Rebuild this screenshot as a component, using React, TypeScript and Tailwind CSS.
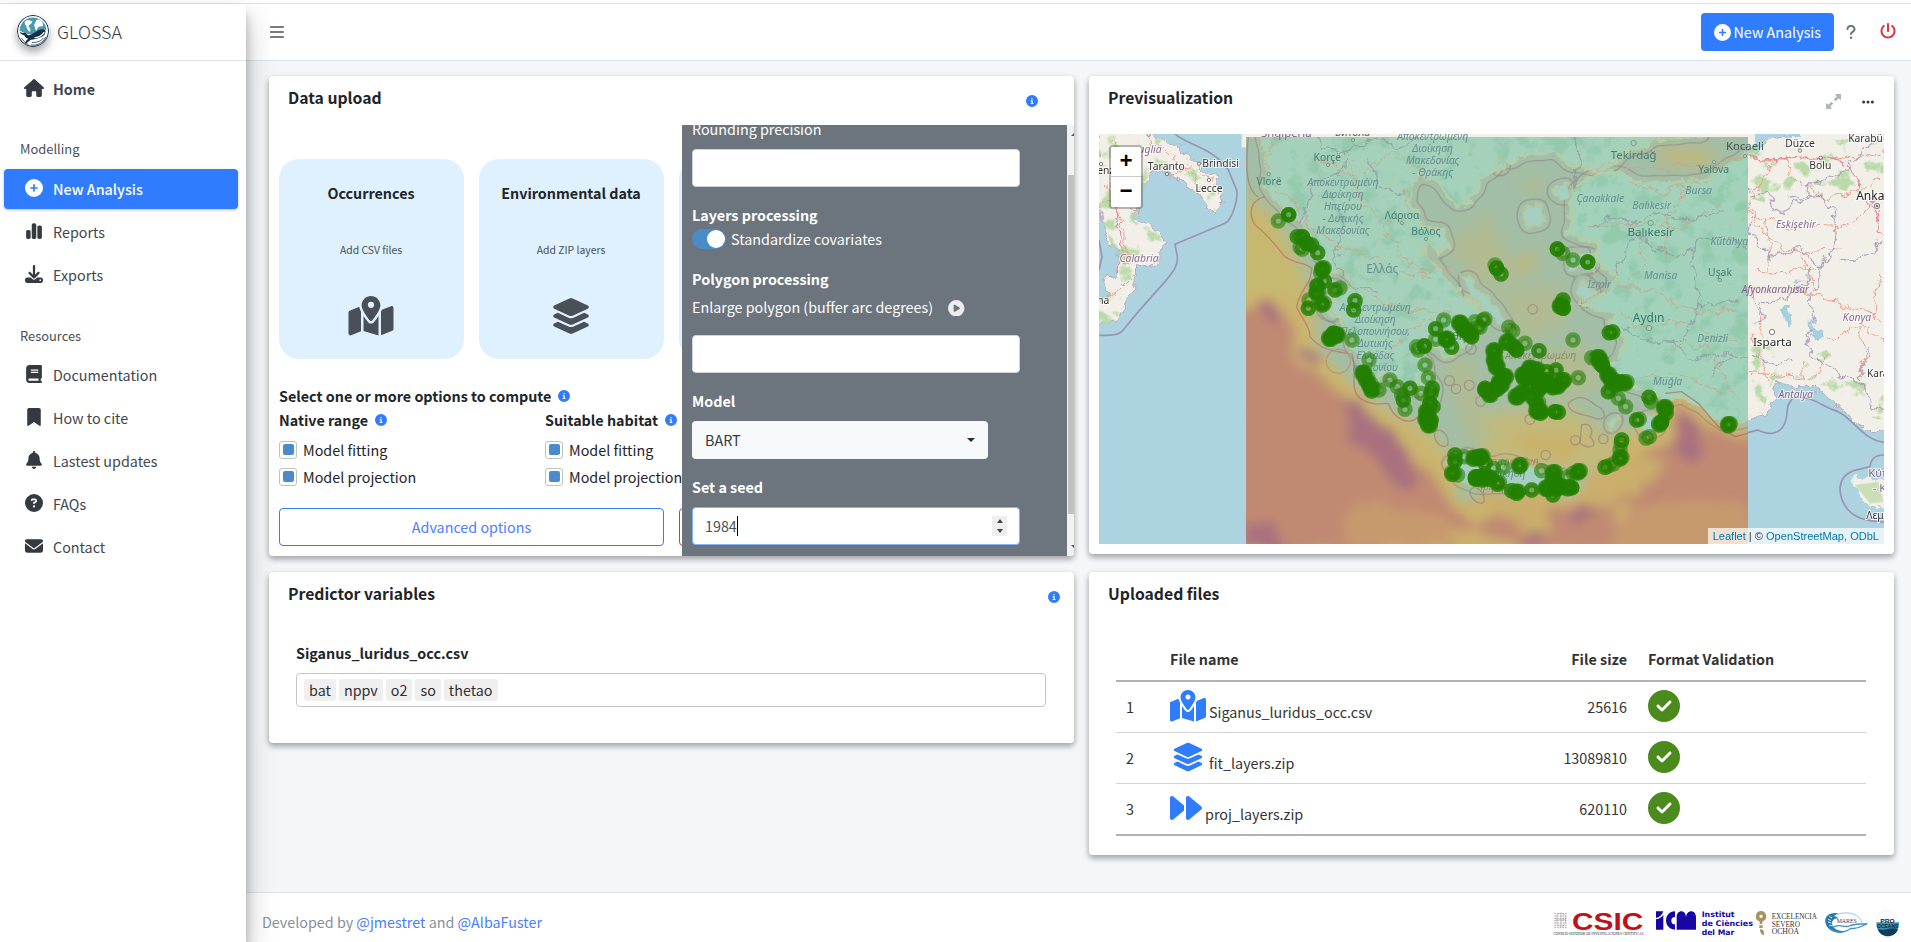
import React from "react";
import {
  FaBars, FaBell, FaBook, FaBookmark, FaChartSimple, FaCircleCheck, FaCircleInfo, FaCirclePlay,
  FaCirclePlus, FaCircleQuestion, FaDownload, FaEllipsis, FaEnvelope, FaForward, FaHouse,
  FaLayerGroup, FaMapLocationDot, FaPowerOff, FaQuestion, FaUpRightAndDownLeftFromCenter,
} from "react-icons/fa6";

type IconType = React.ComponentType<{ className?: string }>;

function WhaleLogo() {
  return (
    <svg viewBox="0 0 62 62" className="h-[32px] w-[32px] shrink-0 rounded-full shadow-[0_5px_8px_rgba(0,0,0,0.35)]">
      <circle cx="31" cy="31" r="30" fill="#fff" stroke="#12304a" strokeWidth="2" />
      <path d="M5 30C6 14 18 5 31 5s26 11 26 24c-6-3-14 1-20 5-8 5-20 4-32-4Z" fill="#4d9aab" />
      <path d="M15 13c5-5 9-2 15-1-1 5-6 6-8 10 4 4 5 6 3 11-4-3-7-7-7-12-3-2-3-5-3-8ZM37 10c6-3 9 0 12 4 3 6 1 9-3 8-5 1-7 3-8 9-4-3-3-8-5-12 2-3 3-5 4-9Z" fill="#fff" />
      <path d="M5 32c4 4 9 3 12 3 2 4 6 5 10 3 7-3 12-9 19-10 4-1 8 0 9 2 1 6-3 11-9 13-7 3-14 4-19 5-4 2-6 6-12 8 1-4 3-8 7-10-4-1-6-3-8-7-4 0-8-3-9-7Z" fill="#12304a" />
      <path d="M34 44c8 0 14-4 19-11" stroke="#fff" strokeWidth="2.5" fill="none" />
      <path d="M9 45c4 7 9 10 13 12m5 1c12 2 24-4 29-16m-27 11c10 1 18-3 23-9" stroke="#12304a" strokeWidth="1.5" fill="none" />
    </svg>
  );
}

function NavItem({ icon: Icon, label, active, bold }: { icon: IconType; label: string; active?: boolean; bold?: boolean }) {
  return (
    <div className={`mb-[3px] ml-1 mr-2 flex h-10 items-center rounded pl-[18px] text-[14.33px] ${active ? "bg-[#2f7cff] text-white shadow-[0_1px_3px_rgba(0,0,0,0.25)] font-medium" : "text-[#3f464d]"} ${bold ? "font-bold" : ""}`}>
      <span className={`mr-[7px] flex w-[24px] justify-center pb-[3px] text-[18px] ${active ? "" : "text-[#343a40]"}`}>
        <Icon className={bold ? "h-[18px] w-[20px]" : ""} />
      </span>
      <span>{label}</span>
    </div>
  );
}

function Sidebar() {
  return (
    <aside className="relative z-20 w-[246px] shrink-0 bg-white shadow-[0_14px_28px_rgba(0,0,0,0.25),0_10px_10px_rgba(0,0,0,0.22)]">
      <div className="flex h-[57px] items-center gap-[8px] border-b border-[#dee2e6] pl-[17px] pb-[3px] text-[17.9px] font-light text-[#343a40]">
        <WhaleLogo />
        <span className="pt-px">GLOSSA</span>
      </div>
      <div className="pt-[8px]"><NavItem icon={FaHouse} label="Home" bold /></div>
      <div className="mt-[24px] mb-[5px] pl-5 text-[12.9px] leading-[31px] text-[#495057]">Modelling</div>
      <NavItem icon={FaCirclePlus} label="New Analysis" active />
      <NavItem icon={FaChartSimple} label="Reports" />
      <NavItem icon={FaDownload} label="Exports" />
      <div className="mt-[24px] mb-[2px] pl-5 text-[12.9px] leading-[34px] text-[#495057]">Resources</div>
      <NavItem icon={FaBook} label="Documentation" />
      <NavItem icon={FaBookmark} label="How to cite" />
      <NavItem icon={FaBell} label="Lastest updates" />
      <NavItem icon={FaCircleQuestion} label="FAQs" />
      <NavItem icon={FaEnvelope} label="Contact" />
    </aside>
  );
}

function Card({ title, className, tools, children }: { title: string; className: string; tools?: React.ReactNode; children: React.ReactNode }) {
  return (
    <section className={`flex flex-col overflow-hidden rounded bg-white shadow-[0_3px_6px_rgba(0,0,0,0.16),0_3px_6px_rgba(0,0,0,0.23)] ${className}`}>
      <header className="flex h-[49px] shrink-0 items-start justify-between pl-[19px]">
        <h3 className="pt-[8px] text-[15.75px] font-bold leading-[28px] text-[#1f2428]">{title}</h3>
        {tools}
      </header>
      {children}
    </section>
  );
}

const Info = () => <FaCircleInfo className="inline-block h-3 w-3 shrink-0 text-[#2f7cff]" />;

function DropBox({ title, hint, icon }: { title: string; hint: string; icon?: React.ReactNode }) {
  return (
    <div className="flex h-[200px] w-[185px] shrink-0 flex-col items-center rounded-[20px] bg-[#dff1fe]">
      <div className="mt-[21px] h-[26px] pr-px text-[14.33px] font-bold leading-[26px] text-[#212529]">{title}</div>
      <div className="mt-[34px] h-[20px] pr-px text-[10.4px] leading-[20px] text-[#495057]">{hint}</div>
      <div className="mt-[36px] pr-px text-[40px] text-[#495057]">{icon}</div>
    </div>
  );
}

function Check({ label }: { label: string }) {
  return (
    <div className="flex h-[27px] items-center gap-[6px]">
      <span className="flex h-[18px] w-[18px] items-center justify-center rounded-[3px] border border-[#bdc3c7] bg-white">
        <span className="h-[11px] w-[11px] rounded-[2px] bg-[#4c8bca]" />
      </span>
      <span>{label}</span>
    </div>
  );
}

function OptionGroup({ title }: { title: string }) {
  return (
    <div className="w-[266px] shrink-0">
      <div className="mb-[4px] flex h-[24px] items-center gap-[7px] font-bold">{title} <Info /></div>
      <Check label="Model fitting" />
      <Check label="Model projection" />
    </div>
  );
}

function AdvancedPanel() {
  return (
    <div className="absolute right-0 top-0 flex h-[431px] w-[392px] overflow-hidden">
      <div className="w-[385px] shrink-0 overflow-hidden bg-[#6c757d] pl-[10px] text-[14.33px] leading-6 text-white">
        <div className="-mt-[8px]">Rounding precision</div>
        <div className="mt-[8px] h-[38px] w-[328px] rounded border border-[#ced4da] bg-white" />
        <div className="mt-[16px] font-bold">Layers processing</div>
        <div className="mt-[2px] flex items-center gap-[5px] leading-[20px]">
          <span className="flex h-5 w-[34px] items-center justify-end rounded-full bg-[#4c8bca] pr-px">
            <span className="h-[18px] w-[18px] rounded-full bg-white" />
          </span>
          Standardize covariates
        </div>
        <div className="mt-[18px] font-bold">Polygon processing</div>
        <div className="mt-[4px] flex items-center">Enlarge polygon (buffer arc degrees) <FaCirclePlay className="ml-[15px] mt-[2px] text-[16.5px] text-[#ececec]" /></div>
        <div className="mt-[16px] h-[38px] w-[328px] rounded border border-[#ced4da] bg-white" />
        <div className="mt-[16px] font-bold">Model</div>
        <div className="mt-[8px] flex h-[38px] w-[296px] items-center justify-between rounded bg-[#f8f9fa] pl-[13px] pr-[13px] text-[#343a40]">
          BART
          <span className="h-0 w-0 border-x-4 border-t-4 border-x-transparent border-t-[#1f2d3d]" />
        </div>
        <div className="mt-[16px] font-bold">Set a seed</div>
        <div className="mt-[8px] flex h-[38px] w-[328px] items-center rounded border border-[#80b4ff] bg-white pl-[12px] pr-3 text-[#495057]">
          <span>1984</span>
          <span className="h-5 w-px bg-black" />
          <span className="ml-auto flex h-5 w-[15px] flex-col items-center justify-center gap-[6px] bg-[#efefef]">
            <span className="h-0 w-0 border-x-[3.5px] border-b-[4px] border-x-transparent border-b-[#444]" />
            <span className="h-0 w-0 border-x-[3.5px] border-t-[4px] border-x-transparent border-t-[#444]" />
          </span>
        </div>
      </div>
      <div className="flex w-[7px] flex-col items-end justify-between bg-[#f1f1f1]">
        <span className="mt-[8px] h-0 w-0 border-l-[3px] border-b-[3px] border-l-transparent border-b-[#555]" />
        <span className="mt-[39px] w-[6px] flex-1 bg-[#c1c1c1]" />
        <span className="mb-[8px] mt-[31px] h-0 w-0 border-l-[3px] border-t-[3px] border-l-transparent border-t-[#555]" />
      </div>
    </div>
  );
}

function DataUpload() {
  return (
    <Card title="Data upload" className="h-[480px]" tools={<span className="mr-[36px] mt-[19px] flex items-center"><Info /></span>}>
      <div className="relative flex-1 overflow-hidden pl-[10px] text-[14.33px] leading-6 text-[#212529]">
        <div className="mt-[34px] flex gap-[15px]">
          <DropBox title="Occurrences" hint="Add CSV files" icon={<FaMapLocationDot className="h-[40px] w-[46px]" />} />
          <DropBox title="Environmental data" hint="Add ZIP layers" icon={<FaLayerGroup />} />
          <DropBox title="" hint="" />
        </div>
        <div className="mt-[24px] flex h-[25px] items-center gap-[7px] font-bold">Select one or more options to compute <Info /></div>
        <div className="flex">
          <OptionGroup title="Native range" />
          <OptionGroup title="Suitable habitat" />
        </div>
        <div className="mt-[18px] flex gap-[15px]">
          <div className="flex h-[38px] w-[385px] shrink-0 items-center justify-center rounded border border-[#2f7cff] text-[#4d7dff]">Advanced options</div>
          <div className="h-[38px] w-[385px] shrink-0 rounded border border-[#dc3545]" />
        </div>
        <AdvancedPanel />
      </div>
    </Card>
  );
}

/* Sampling locations: x, y and number of stacked records. */
const west: number[][] = [
  [580,483,1],[611,464,3],[637,530,2],[652,530,3],[665,550,3],[680,555,2],[652,568,1],[645,562,1],[698,578,2],[714,627,5],[707,638,1],[718,663,2],[697,677,3],[697,697,4],[750,690,2],[765,684,1],[672,720,1],[670,745,2],[714,732,4],[810,722,2],[806,750,2],[735,835,6],[755,825,6],[745,820,3],[801,840,1],[852,900,1],[835,940,6],[845,958,4],[855,975,4],[862,990,4],[882,990,1],[915,960,1],[937,980,1],[950,1005,1],[955,1020,2],[960,1048,1],[975,985,2],[1008,1000,1],[1020,915,1],[1030,953,1],[1042,985,2],[1038,1000,2],[1044,1040,2],[1026,1055,5],[1024,1078,6],[1032,1094,6],[1038,1080,3],[1035,1030,3],
  [1076,780,1],[1052,806,2],[1052,838,1],[995,860,1],[1000,870,1],[1018,858,3],[1085,838,6],[1100,862,2],[1125,790,6],[1138,808,6],[1155,822,4],[1160,830,2],[1170,785,1],[1178,800,1],[1195,780,1],[1110,1185,2],[1110,1203,3],[1104,1240,4],[1118,1245,1],[1138,1190,1],[1168,1195,5],[1185,1193,5],[1175,1253,5],[1195,1257,5],[1200,990,3],
];
const east: number[][] = [
  [232,567,3],[248,580,1],[279,600,1],[323,606,3],[45,615,1],[50,625,3],[63,642,2],[249,720,2],[242,738,5],[250,745,3],[15,777,1],[0,802,1],[86,802,1],[98,812,1],[82,847,5],[110,870,3],[100,858,3],[135,850,1],[177,872,2],[43,873,6],[50,920,6],[44,900,5],[75,950,6],[60,965,5],[50,985,6],[30,1003,6],[65,975,5],[15,985,2],
  [130,945,6],[150,925,6],[170,930,5],[180,965,6],[150,980,6],[175,990,5],[110,1010,6],[125,1000,5],[135,955,5],[160,1010,4],[172,1030,4],[172,1052,6],[183,1057,5],[225,1055,3],[235,1057,2],[228,930,2],[200,935,2],[200,960,3],[220,980,5],[235,978,5],[250,962,5],[190,975,5],[295,953,1],[279,840,1],[388,818,2],[398,816,2],[335,893,1],[355,893,6],[362,907,5],[368,918,3],[385,945,5],[395,960,5],[405,970,5],[420,968,5],[437,968,4],[385,995,2],[395,985,1],[415,1015,1],[437,1040,1],
  [507,1012,2],[513,1025,1],[555,1043,6],[558,1060,2],[545,1085,3],[540,1092,4],[470,1080,2],[478,1078,1],[498,1135,1],[508,1130,1],[747,1094,5],[425,1140,2],[423,1150,1],[420,1170,1],[422,1194,5],[375,1222,2],[385,1218,1],[400,1212,1],[297,1235,5],[280,1240,1],[262,1252,1],[222,1238,5],[220,1260,6],[240,1280,6],[265,1283,4],[275,1283,3],[200,1285,6],[225,1285,6],[219,1305,2],[155,1290,2],[112,1297,5],[95,1292,2],[120,1217,5],[70,1222,1],[40,1225,1],[185,1232,1],[5,1190,4],[15,1210,2],[10,1250,5],[30,1255,5],[55,1270,4],[-10,1255,4],
];

const greece = "M528 200L545 310 537 370 575 430 640 480 680 530 700 590 745 630 790 645 800 680 745 720 720 750 765 770 790 830 830 890 862 965 905 945 940 950 965 1000 990 990 1000 950 1030 1020 1060 1030 1030 930 985 870 1035 850 1080 890 1140 850 1120 790 1180 800 1205 770 1150 715 1085 660 1040 610 1010 570 1035 545 1060 580 1095 560 1075 510 1020 510 975 430 980 370 1010 340 1060 370 1120 440 1160 430 1190 350 1250 310 1400 270 1480 320 1570 330 1620 280 1700 240 1860 225 1860 200Z";
const anatolia = "M1440 530L1460 440 1465 390 1530 340 1600 345 1660 365 1750 370 1830 365 1900 335 1960 295 2010 270 2100 215 2420 200 2420 1108 2355 1112 2315 1090 2265 1045 2205 995 2145 975 2075 968 2065 1020 2045 1065 1989 1080 1932 1094 1890 1080 1850 1040 1785 1005 1740 1020 1700 1000 1640 975 1580 970 1560 920 1610 880 1625 840 1580 800 1575 760 1490 725 1560 700 1590 660 1530 590 1545 540Z";
const islands = "M1080 1205l60-20 90 25 90-5 70 30 80 15-20 25-120 5-130 5-90-20ZM1130 640l60 50 60 60 20 50-40-15-80-80ZM1320 440l60 0 0 40-50 20-20-30ZM1400 385l50-10 0 30-30 10ZM1480 670l50 10-10 40-50-10ZM1240 300l30-10 0 30-30 10ZM1450 570l70 10 10 50-70-10ZM1570 1090l30-20-10 50ZM1660 1080l70 -20-10 50-40 20ZM690 650l20 10 0 30-20-10ZM705 735l30 0 10 30-30-10Z";
const italy = "M42 200L190 222 262 250 290 272 345 312 372 345 405 372 417 400 400 460 370 440 350 412 345 388 310 370 262 355 245 335 215 338 195 352 170 395 160 435 142 460 150 485 190 500 215 510 232 540 230 590 205 615 155 625 152 690 120 725 95 790 30 790 30 740 70 705 55 660 90 650 105 610 75 545 50 480 30 430Z";

type LabelProps = { x: number; y: number; t: string; s?: number; c?: string; i?: boolean; halo?: boolean };
const Label = ({ x, y, t, s = 31, c = "#447f74", i, halo }: LabelProps) => (
  <text x={x} y={y} fontSize={s} fill={c} textAnchor="middle" fontStyle={i ? "italic" : "normal"} stroke={halo ? "#fff" : "none"} strokeOpacity={0.75} strokeWidth={halo ? 6 : 0} paintOrder="stroke">{t}</text>
);

const apokentro = (x: number, y: number, lines: string[]) => lines.map((t, k) => <Label key={`${x}-${k}`} x={x} y={y + k * 36} t={t} i c="#668f94" />);

function MapView() {
  return (
    <svg viewBox="42 222 2355 1230" className="block h-[410px] w-[785px]" fontFamily='"Noto Sans", sans-serif'>
      <defs>
        <clipPath id="raster"><rect x="483" y="231" width="1506" height="1221" /></clipPath>
        <filter id="soft" x="-20%" y="-20%" width="140%" height="140%"><feGaussianBlur stdDeviation="24" /></filter>
        <filter id="haze" x="-20%" y="-20%" width="140%" height="140%">
          <feTurbulence type="fractalNoise" baseFrequency="0.012" numOctaves="3" seed="8" result="n" />
          <feDisplacementMap in="SourceGraphic" in2="n" scale="70" xChannelSelector="R" yChannelSelector="G" result="d" />
          <feGaussianBlur in="d" stdDeviation="16" />
        </filter>
        <filter id="rough" x="-5%" y="-5%" width="110%" height="110%">
          <feTurbulence type="fractalNoise" baseFrequency="0.025" numOctaves="4" seed="3" result="n" />
          <feDisplacementMap in="SourceGraphic" in2="n" scale="48" xChannelSelector="R" yChannelSelector="G" />
        </filter>
        <filter id="forest" x="0" y="0" width="100%" height="100%" colorInterpolationFilters="sRGB">
          <feTurbulence type="fractalNoise" baseFrequency="0.02" numOctaves="5" seed="11" result="n" />
          <feColorMatrix in="n" values="0 0 0 0 0.70  0 0 0 0 0.84  0 0 0 0 0.62  7 0 0 0 -3.9" result="g" />
          <feComposite in="g" in2="SourceAlpha" operator="in" />
        </filter>
        <filter id="grove" x="0" y="0" width="100%" height="100%" colorInterpolationFilters="sRGB">
          <feTurbulence type="fractalNoise" baseFrequency="0.018" numOctaves="5" seed="4" result="n" />
          <feColorMatrix in="n" values="0 0 0 0 0.52  0 0 0 0 0.77  0 0 0 0 0.64  6 0 0 0 -3.2" result="g" />
          <feComposite in="g" in2="SourceAlpha" operator="in" />
        </filter>
        <filter id="contour" x="-10%" y="-10%" width="120%" height="120%" colorInterpolationFilters="sRGB">
          <feTurbulence type="fractalNoise" baseFrequency="0.025" numOctaves="3" seed="3" result="n" />
          <feDisplacementMap in="SourceAlpha" in2="n" scale="48" xChannelSelector="R" yChannelSelector="G" result="d" />
          <feGaussianBlur in="d" stdDeviation="15" />
          <feComponentTransfer result="b"><feFuncA type="table" tableValues="0 0 0.6 0 0 0 0 0 0 0 0 0 0 0 0 0 0 0 0 0 0 0 0 0 0 0" /></feComponentTransfer>
          <feFlood floodColor="#94807f" />
          <feComposite in2="b" operator="in" />
        </filter>
      </defs>

      <rect x="42" y="222" width="2355" height="1230" fill="#add2e0" />
      <rect x="470" y="222" width="1540" height="40" fill="#f2efe9" />
      <g filter="url(#rough)">
        <path d={italy} fill="#f2efe9" stroke="#b9a8bd" strokeWidth="3" />
        <path d={anatolia} fill="#f2efe9" stroke="#b9a8bd" strokeWidth="3" />
        <path d="M2298 1270l25-20 50 0 40 30 0 65-50-5-35-25Z" fill="#f2efe9" />
      </g>
      <g opacity="0.85">
        <path d={italy} fill="#000" filter="url(#forest)" />
        <path d="M1995 225h130l90 20 180-20v130l-100 40-100-20-130 60-70-20ZM1995 860l60-10 90 50 80-30 70 90 100 20v100l-60-10-110-90-100-30-60 10-30 90-40 20Z" filter="url(#forest)" />
        <path d="M2310 1275l70-10 15 60-40 5Z" fill="#c3dcae" />
      </g>
      <g fill="none" stroke="#9585a8" strokeWidth="5" strokeOpacity=".8">
        <path d="M270 222C305 255 385 262 430 330L455 390C460 420 440 480 420 490L270 553 277 590C280 620 260 640 240 665L160 755 110 815C95 830 60 826 42 826M42 540l9 50-9 40" />
        <path d="M1989 1118l30-8c40 20 75 10 85-35 5-30-2-35 20-62 55-10 90 30 135 42 45 20 75 85 138 92M2397 1185c-35 0-40 20-42 35l-50 12c-55 20-45 80-18 115 30 35 70 35 110 40" />
      </g>
      <g fill="none" stroke="#ee9d86" strokeWidth="3" filter="url(#rough)">
        <path d="M190 222l10 60M80 240l60 90-60 60 35 90 5 120 40 10M60 370l110 90M245 342l90 -30 70 90M160 632l-60 60-60 30M215 250l140 130" />
        <path d="M1989 290l90 10 130-10 110 10 77-20M2100 290l30 70 100 60 160-60M1989 455l120 50 180-10 70-60M2060 300l-70 130 60 110 100 40 120-10M2010 635h120l60-10M2040 470l20 170M2125 690l140 40 100 30 32 30M2150 580l30 110M2000 940l100 10 80 10 60-90M2150 900l10 60M2330 790l67 50M2330 800l-100 40M2330 800l10 90-20 60M2385 650l-20 130M1995 830l60 130M2005 680l30 150" />
      </g>
      <g fill="none" stroke="#e589a5" strokeWidth="4" filter="url(#rough)"><path d="M50 430l50 10 5 90-5 110M1989 285l110 15 150-10 70 60 5 60 40 30 30 80M2397 400l-50 40" /></g>
      <g fill="none" stroke="#9a89ad" strokeWidth="4" strokeOpacity=".75" filter="url(#rough)">
        <path d="M1989 405l60-10 20 60 100-40 10-40 130-60 30-50 50-20M2105 415l110-10 30 50 10 120-50 40-60-50-90 25-60-70 10-50M2210 600l-10 90-30 10 20 90-30 70 60 50 110 70 20 60 60 10M2010 790l40-60 100-40 25-80M2270 600l80-10 40-50M2000 890l60 20 70-20M2350 870l-30 90" />
      </g>
      <g fill="#a5cfe0" filter="url(#rough)"><path d="M2095 730l15 0 10 50-15 25-10-30ZM2170 785l15 0 30 50-20 10ZM2085 222h60v14l-50-4ZM2135 660l15 3-8 10Z" /></g>

      <g clipPath="url(#raster)">
        <rect x="483" y="231" width="1506" height="1221" fill="#a2bea6" />
        <g filter="url(#soft)">
          <path d="M483 400l80 60 70 120 50 130 20 170 90 120 250 120 100 120-50 80-400-180-250-430Z" fill="#c7b870" />
          <path d="M1140 520l70-50 30 50-90 50ZM1180 560l60-10-20 90ZM1290 630l40-60 30 20-40 60ZM1310 370l40-10 10 40Z" fill="#c9b46e" />
          <path d="M1700 270h190l-20 45-140-10Z" fill="#c9b46e" />
          <path d="M1180 1060l280-20 120 90 200-90 110 40-100 120-100 120-160-80-350-20Z" fill="#c3b97a" />
          <path d="M1250 690l170-20 30 120-150 60ZM1070 900l90 0 60 250-60 20ZM1350 880l140-30 70 130-130 40ZM1080 560l130-100 90 180-90 60Z" fill="#b1bb92" />
        </g>
        <g filter="url(#haze)">
          <path d="M420 730L560 720 635 750 650 880 750 960 830 1020 940 1110 1040 1210 1110 1310 1180 1380 1300 1340 1470 1320 1620 1180 1725 1130 1770 1030 1825 1030 1880 1100 2060 1130 2060 1500 420 1500Z" fill="#c08a72" stroke="#cbb36d" strokeWidth="40" />
          <path d="M1130 1320l170-20 150 10-60 50-140 30ZM1500 1250l130-60 100 10-60 90-170 80ZM1270 1400l90-40 40 30-70 50ZM900 1430l200-40 200 60-20 60H900ZM1580 1340l60-20-20 60-50 20Z" fill="#caae6c" />
          <path d="M760 1000l70 20 30 50 60 50 60 60 20 60-30 50-60-30-70-90-60-60ZM655 865l45 10 10 40-40 5ZM480 1370l80 30 60 80H470ZM500 750l40-30 50 50-40 20ZM1780 1070l35 0 50 90-50 60-50-40ZM1450 1380l50-40 50-20-30 50-50 30ZM1330 1420l50-10-10 30-50 20Z" fill="#a9717e" />
          <path d="M1600 1360l200-40 200 20v160h-420ZM800 1330l260 30 60 100H770Z" fill="#c79a6e" />
          <path d="M1250 1160l70-40 130 0 60 30-70 50-100-30Z" fill="#c9b26c" />
        </g>
        <g>
          <path d={greece} filter="url(#contour)" />
          <path d={anatolia} filter="url(#contour)" />
          <path d={islands} filter="url(#contour)" />
        </g>
        <g filter="url(#rough)">
          <path d={greece} fill="#a5d0ba" stroke="#b5cda6" strokeWidth="9" />
          <path d={anatolia} fill="#a2d2bb" stroke="#b5cda6" strokeWidth="9" />
          <path d={islands} fill="#a5cfc0" stroke="#b5c5a0" strokeWidth="6" />
        </g>
        <g opacity=".5">
          <path d={greece} filter="url(#grove)" />
          <path d={anatolia} filter="url(#grove)" />
        </g>
        <g fill="none" stroke="#9b7f7c" strokeOpacity=".65" strokeWidth="4">
          <path d="M540 410c-45 10-50 50-30 85 40 30 60 60 90 95 35 25 60 15 80 35 0 50-35 60-45 115 10 30 40 55 40 90 30 35 50 40 110 50M800 880c20 60-10 100 25 135 40 25 65 15 85 15 15 45 60 70 90 40 25-20 25-50 10-70M490 231c-10 100-5 160 30 180" stroke="#b96a60" />
          <circle cx="760" cy="904" r="36" stroke="#cb8655" /><circle cx="1093" cy="962" r="15" /><circle cx="1113" cy="987" r="14" /><circle cx="1153" cy="976" r="15" /><circle cx="1158" cy="867" r="16" /><circle cx="1187" cy="1024" r="15" /><circle cx="1343" cy="748" r="14" /><circle cx="1382" cy="1185" r="14" /><circle cx="1471" cy="1141" r="14" /><circle cx="1555" cy="1137" r="14" /><circle cx="1335" cy="1078" r="15" />
          <path d="M1050 1115c15-15 45 10 38 40-20 15-45-15-38-40ZM1155 1290c15-20 45 5 42 35-15 15-45-10-42-35ZM1490 1095c30-10 35 20 25 35 30 30-5 40-30 20ZM1450 1030c30-30 60-15 80 5 35 15 40 50 0 40-30-15-80-10-80-45Z" />
          <path d="M1740 1000l50-5 50 35 60 70 50 30 40-10" stroke="#a8656a" />
        </g>
        <g fill="none" stroke="#8d8299" strokeWidth="4" strokeOpacity=".55" filter="url(#rough)">
          <path d="M700 222l10 40 60 10 120-40 40 30 90-40M640 490l30-60 20-70 70-20 30-80M740 400l30 90-20 110 40 80 90 10M860 290l20 80 80 30M1460 222l30 80-20 90M1510 500l80-30 60 20 60-30 80 20 120-20M1590 650l40-120 60 10 80 60 80-70 130 20M1820 560l20 180 120-20M1610 800l90 50 90-10 60-110M1750 840l70 60 80-20 89 10M1870 950l60-60" />
        </g>
        <g fill="none" stroke="#c9a389" strokeWidth="3" strokeOpacity=".85" filter="url(#rough)">
          <path d="M560 240l-20 110 90 80 60 90M700 300l130 60 90-90 100 60M790 300l40 130 60 60 80 120 70 40M640 470l130 100 120 20M830 690l120 60 160 10M940 640l160-10M900 900l60-80 80-40M560 500l-20-60M960 380l10 80-60 30M1500 350l60-40 120 20 180-20 129-20M1500 500l120-10 160 10 120-60M1640 370l90 30 150-40M1640 490l40 120-60 60-130 50M1610 670l120 30 90 60 130-10M1600 740l50 60 150-10 170 60M1830 360l-80 100-10 130M1720 900l80-60 90 40 60 140M1660 950l130-10 120 60" />
        </g>
      </g>

      <Label x={244} y={329} t="Taranto" c="#333" halo /><Label x={407} y={321} t="Brindisi" c="#333" halo /><Label x={372} y={395} t="Lecce" c="#333" halo />
      <Label x={195} y={278} t="uglia" i c="#8a6690" halo /><Label x={162} y={606} t="Calabria" i c="#8a6690" halo /><Label x={55} y={731} t="na" c="#333" halo /><Label x={62} y={343} t="enz" c="#333" halo />
      <Label x={604} y={232} t="Shqipëria" s={34} c="#80608a" /><Label x={802} y={229} t="Битола" c="#555" />
      <Label x={727} y={303} t="Korçë" /><Label x={552} y={375} t="Vlorë" />
      <Label x={951} y={477} t="Λάρισα" /><Label x={1023} y={526} t="Βόλος" /><Label x={892} y={638} t="Ελλάς" s={36} c="#668f94" />
      {apokentro(1043, 241, ["Αποκεντρωμένη", "Διοίκηση", "Μακεδονίας", "- Θράκης"])}
      {apokentro(774, 377, ["Αποκεντρωμένη", "Διοίκηση", "Ηπείρου", "- Δυτικής", "Μακεδονίας"])}
      {apokentro(871, 752, ["Αποκεντρωμένη", "Διοίκηση", "Πελοποννήσου,", "Δυτικής", "Ελλάδας", "και Ιονίου"])}
      <Label x={1130} y={840} t="Αθήνα" s={34} c="#4d8068" />
      <g transform="translate(1185 0)">
        <Label x={461} y={298} t="Tekirdağ" s={34} /><Label x={795} y={271} t="Kocaeli" s={34} c="#3e5550" /><Label x={701} y={340} t="Yalova" />
        <Label x={960} y={262} t="Düzce" c="#333" halo /><Label x={1021} y={327} t="Bolu" c="#333" halo /><Label x={1165} y={245} t="Karabük" c="#333" halo /><Label x={1188} y={419} t="Ankara" s={36} c="#222" halo />
        <Label x={656} y={403} t="Bursa" i c="#668f94" /><Label x={361} y={425} t="Çanakkale" i c="#668f94" /><Label x={515} y={446} t="Balıkesir" i c="#668f94" />
        <Label x={512} y={527} t="Balıkesir" s={35} c="#33796b" /><Label x={748} y={555} t="Kütahya" i c="#668f94" /><Label x={948} y={505} t="Eskişehir" i c="#8a6690" halo />
        <Label x={542} y={656} t="Manisa" i c="#668f94" /><Label x={358} y={683} t="İzmir" i c="#668f94" /><Label x={720} y={648} t="Uşak" />
        <Label x={886} y={698} t="Afyonkarahisar" i s={30} c="#80608a" /><Label x={506} y={787} t="Aydın" s={36} c="#33796b" /><Label x={698} y={845} t="Denizli" i c="#668f94" />
        <Label x={877} y={858} t="Isparta" s={35} c="#222" halo /><Label x={1131} y={782} t="Konya" i c="#8a6690" halo /><Label x={563} y={976} t="Muğla" i c="#668f94" />
        <Label x={947} y={1013} t="Antalya" i c="#80608a" halo /><Label x={1225} y={951} t="Karaman" c="#333" halo s={30} /><Label x={182} y={898} t="Αποκεντρωμένη" i c="#8c8d63" />
        <Label x={70} y={1215} t="Αποκεντρωμένη" i c="#b4825c" /><Label x={75} y={1250} t="Διοίκηση" i c="#668f94" /><Label x={40} y={1289} t="Κρήτης" i c="#b4825c" />
        <Label x={1225} y={1250} t="Κύπρος" s={34} c="#80608a" halo /><Label x={1233} y={1295} t="- Kıbrıs" s={34} c="#80608a" halo /><Label x={1218} y={1376} t="Λεμεσός" c="#333" halo />
      </g>
      <g fill="#fff" fillOpacity=".7" stroke="#666" strokeWidth="2.5">
        {[[191,224],[246,342],[342,311],[372,360],[48,312],[2145,272],[2207,293],[2061,816],[2376,438]].map(([x, y]) => <circle key={`${x}${y}`} cx={x} cy={y} r={x > 2050 && y > 400 ? 8 : 5} />)}
        <circle cx="2376" cy="438" r="3" fill="#333" />
      </g>
      <g fill="#a9cdb5" stroke="#6c9589" strokeWidth="2.5">
        {[[729,315],[551,342],[804,240],[951,489],[1023,537],[1646,249],[1697,489],[1887,306],[1980,288],[1905,660],[1692,804]].map(([x, y]) => <circle key={`${x}${y}`} cx={x} cy={y} r={x > 1640 && x < 1700 ? 8 : 5} />)}
      </g>
      <g fill="#228000" fillOpacity=".2" stroke="#228000" strokeOpacity=".58" strokeWidth="15.5">
        {west.flatMap(([x, y, n]) => Array.from({ length: n }, (_, k) => <circle key={`w${x}-${y}-${k}`} cx={x + (n > 3 ? ((k % 3) - 1) * 4 : 0)} cy={y + (n > 3 ? ((k % 2) * 2 - 1) * 3 : 0)} r="15.5" />))}
        {east.flatMap(([x, y, n]) => Array.from({ length: n }, (_, k) => <circle key={`e${x}-${y}-${k}`} cx={1185 + x + (n > 3 ? ((k % 3) - 1) * 4 : 0)} cy={y + (n > 3 ? ((k % 2) * 2 - 1) * 3 : 0)} r="15.5" />))}
      </g>
    </svg>
  );
}

function Previsualization() {
  return (
    <Card
      title="Previsualization"
      className="h-[478px]"
      tools={<span className="mr-[19px] mt-[18px] flex items-center gap-[20px]"><FaUpRightAndDownLeftFromCenter className="text-[15px] text-[#adb5bd]" /><FaEllipsis className="text-[14px] text-[#343a40]" /></span>}
    >
      <div className="relative ml-[10px] mt-[9px] h-[410px] w-[785px] overflow-hidden">
        <MapView />
        <div className="absolute left-[10px] top-[11px] flex w-[34px] flex-col overflow-hidden rounded border-2 border-black/25 bg-clip-padding text-center font-['Liberation_Mono',monospace] text-[22px] font-bold text-black">
          <span className="h-[30px] border-b border-[#ccc] bg-white leading-[31px]">+</span>
          <span className="h-[30px] bg-white leading-[32px]">−</span>
        </div>
        <div className="absolute bottom-0 right-0 h-4 whitespace-nowrap bg-white/70 px-[5px] font-['Liberation_Sans',sans-serif] text-[11.05px] leading-4 text-[#333]">
          <span className="text-[#0078a8]">Leaflet</span> | © <span className="text-[#0078a8]">OpenStreetMap, ODbL</span>
        </div>
      </div>
    </Card>
  );
}

function PredictorVariables() {
  return (
    <Card title="Predictor variables" className="h-[171px]" tools={<span className="mr-[14px] mt-[19px] flex"><Info /></span>}>
      <div className="pl-[27px] pr-[28px] text-[14.33px] leading-6 text-[#212529]">
        <div className="mt-[20px] font-bold">Siganus_luridus_occ.csv</div>
        <div className="mt-[8px] flex h-[34px] items-center gap-[3px] rounded border border-[#c4c4c4] pl-[7px]">
          {["bat", "nppv", "o2", "so", "thetao"].map((t) => <span key={t} className="h-[22px] rounded-[3px] bg-[#efefef] px-[5px] leading-[22px] text-[#303030]">{t}</span>)}
        </div>
      </div>
    </Card>
  );
}

const files: { name: string; size: string; icon: IconType; box: string; glyph: string }[] = [
  { name: "Siganus_luridus_occ.csv", size: "25616", icon: FaMapLocationDot, box: "w-[36px]", glyph: "h-[32px] w-[36px]" },
  { name: "fit_layers.zip", size: "13089810", icon: FaLayerGroup, box: "w-[36px]", glyph: "h-[32px] w-[32px]" },
  { name: "proj_layers.zip", size: "620110", icon: FaForward, box: "w-[32px]", glyph: "h-[32px] w-[32px]" },
];

function UploadedFiles() {
  return (
    <Card title="Uploaded files" className="h-[283px]">
      <div className="ml-[27px] mr-[28px] mt-[17px] border-b-2 border-[#b3b3b3] text-[14.33px] text-[#333]">
        <div className="flex h-[44px] items-center border-b-2 border-[#b3b3b3] font-bold">
          <span className="w-[54px]" /><span className="w-[300px]">File name</span>
          <span className="w-[157px] text-right">File size</span><span className="ml-[21px]">Format Validation</span>
        </div>
        {files.map(({ name, size, icon: Icon, box, glyph }, i) => (
          <div key={name} className={`flex items-center ${i < 2 ? "h-[51px] border-b border-[#d3d3d3]" : "h-[50px]"}`}>
            <span className="w-[54px] pl-[10px]">{i + 1}</span>
            <span className="flex w-[300px] items-center gap-[3px]">
              <span className={`flex ${box} justify-center pb-[3px] text-[#2f7cff]`}><Icon className={glyph} /></span>
              <span className="pt-[9px]">{name}</span>
            </span>
            <span className="w-[157px] text-right">{size}</span>
            <FaCircleCheck className="mb-[2px] ml-[21px] text-[32px] text-[#4b8b1d]" />
          </div>
        ))}
      </div>
    </Card>
  );
}

function Partners() {
  const serif = '"Liberation Serif", serif';
  return (
    <svg viewBox="30 45 1071 105" className="h-[35px] w-[357px]">
      <g stroke="#a9a9a9" strokeWidth="3" strokeDasharray="5 3"><path d="M43 71h40M43 78h40M43 85h40M43 92h40M43 99h40M43 106h40M43 113h40" /></g>
      <path d="M50 76q13-14 26 0v26q-13 14-26 0ZM50 89h26M63 71v38" stroke="#b5aaaa" strokeWidth="2" fill="none" />
      <text x="96" y="119" fontFamily='"Liberation Sans", sans-serif' fontSize="72" fontWeight="bold" fill="#c20f1b" textLength="214" lengthAdjust="spacingAndGlyphs">CSIC</text>
      <text x="40" y="134" fontFamily={serif} fontSize="11" fill="#222" textLength="270" lengthAdjust="spacingAndGlyphs">CONSEJO SUPERIOR DE INVESTIGACIONES CIENTÍFICAS</text>
      <g fill="#1607a5">
        <path d="M348 64h22c-4 12-12 18-22 20ZM348 88c12-2 18-8 22-14v45h-22ZM405 64v17a11 11 0 0 0 0 22v16c-36-1-36-54 0-55ZM410 119V82c0-24 28-24 28 0 2-24 30-24 30 0v37Z" />
        <g fontFamily='"DejaVu Sans", sans-serif' fontWeight="bold" fontSize="23">
          <text x="485" y="81" textLength="99" lengthAdjust="spacingAndGlyphs">Institut</text>
          <text x="485" y="109" textLength="154" lengthAdjust="spacingAndGlyphs">de Ciències</text>
          <text x="485" y="136" textLength="98" lengthAdjust="spacingAndGlyphs">del Mar</text>
        </g>
      </g>
      <path fillRule="evenodd" d="M663 63a16 16 0 0 1 5 31l-2 8h-6l-2-8a16 16 0 0 1 5-31Zm0 11a5 5 0 1 0 .1 0ZM658 106h10v8h-10ZM660 118c12 0 12 6 12 18-8-2-12-8-12-18Z" fill="#a69263" />
      <g fontFamily={serif} fontSize="22" fill="#333">
        <text x="695" y="88" textLength="136" lengthAdjust="spacingAndGlyphs">EXCELENCIA</text>
        <text x="695" y="110" textLength="85" lengthAdjust="spacingAndGlyphs">SEVERO</text>
        <text x="695" y="132" textLength="82" lengthAdjust="spacingAndGlyphs">OCHOA</text>
      </g>
      <path d="M895 70c-25-5-42 8-39 27 5 28 38 36 64 26-25 2-43-6-44-23 0-11 10-16 19-14-2-5-7-8-13-7 4-5 8-7 13-9Z" fill="#2678ad" />
      <path d="M878 113c20-15 35 2 50-5s30-5 54-7c-19 8-26 17-49 14-20 15-43 15-64 1" stroke="#438fba" strokeWidth="4" fill="none" />
      <path d="M890 74c35-14 70 0 76 24" stroke="#9cc7e0" strokeWidth="3" fill="none" />
      <path d="M868 79l8 5m-12 3 9 5m-9 4 10 3m-6 7 10 1" stroke="#d9edf8" strokeWidth="3" />
      <text x="890" y="100" fontFamily={serif} fontSize="19" fill="#163a70" textLength="60" lengthAdjust="spacingAndGlyphs">MARES</text>
      <path d="M1009 97h68c4 48-71 53-68 0Z" fill="#3b93b0" />
      <path d="M1013 117q15 5 30 0t31 0c-8 28-51 30-61 0Z" fill="#103e5a" />
      <path d="M1010 95a33 33 0 0 1 66 0" stroke="#e0edf1" strokeWidth="2" fill="none" />
      <g fontFamily='"Liberation Sans", sans-serif' fontWeight="bold" fill="#17263b"><text x="1021" y="98" fontSize="18" textLength="43" lengthAdjust="spacingAndGlyphs">PRO</text><text x="1011" y="114" fontSize="16" textLength="64" lengthAdjust="spacingAndGlyphs" fill="#0b2434">OCEANS</text></g>
    </svg>
  );
}

export default function App() {
  return (
    <div className="flex h-[942px] w-full flex-col overflow-hidden bg-white font-['Noto_Sans_CJK_SC','Noto_Sans',sans-serif] leading-6">
      <div className="h-[4px] shrink-0 border-b border-[#dee2e6]" />
      <div className="flex min-h-0 flex-1">
        <Sidebar />
        <div className="flex flex-1 flex-col bg-[#f4f6f9]">
          <header className="flex h-[57px] shrink-0 items-center border-b border-[#dee2e6] bg-white pl-[23px] pr-[15px]">
            <FaBars className="text-[16px] text-[#7b7b7b]" />
            <div className="ml-auto flex h-[38px] items-center gap-[3px] rounded bg-[#2f7cff] px-[13px] text-[14.33px] text-white"><FaCirclePlus className="text-[17px]" />New Analysis</div>
            <FaQuestion className="ml-[9px] h-[16px] w-[16px] text-[#6c757d]" />
            <FaPowerOff className="mb-[3px] ml-[21px] text-[16px] text-[#dc3545]" />
          </header>
          <main className="grid flex-1 grid-cols-2 items-start gap-[15px] pl-[23px] pr-[17px] pt-[15px]">
            <div className="flex flex-col gap-[16px]"><DataUpload /><PredictorVariables /></div>
            <div className="flex flex-col gap-[18px]"><Previsualization /><UploadedFiles /></div>
          </main>
          <footer className="flex h-[50px] shrink-0 items-center justify-between border-t border-[#dee2e6] bg-white pl-4 pr-1 text-[14.33px] text-[#869099]">
            <span className="pt-[8px]">Developed by <span className="text-[#4d7dff]">@jmestret</span> and <span className="text-[#4d7dff]">@AlbaFuster</span></span>
            <div className="pt-[10px]"><Partners /></div>
          </footer>
        </div>
      </div>
    </div>
  );
}
